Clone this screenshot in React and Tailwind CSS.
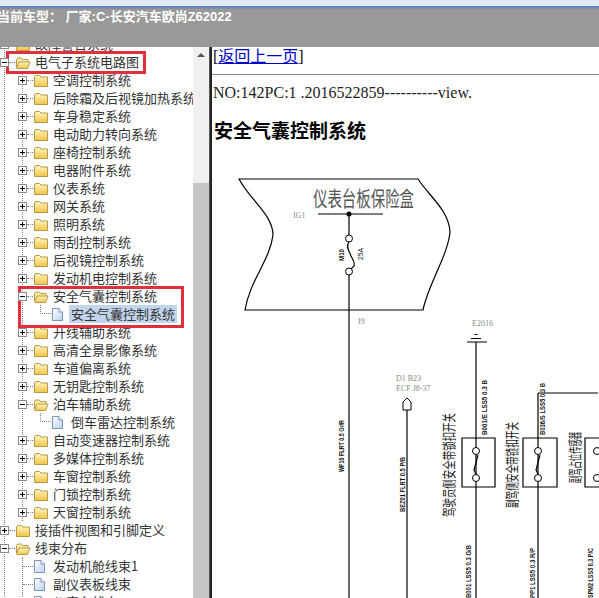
const cjk = { fontFamily: '"Noto Sans CJK SC", sans-serif' };

// child nodes under 电气子系统电路图
const systems = [
  { name: "空调控制系统" },
  { name: "后除霜及后视镜加热系统" },
  { name: "车身稳定系统" },
  { name: "电动助力转向系统" },
  { name: "座椅控制系统" },
  { name: "电器附件系统" },
  { name: "仪表系统" },
  { name: "网关系统" },
  { name: "照明系统" },
  { name: "雨刮控制系统" },
  { name: "后视镜控制系统" },
  { name: "发动机电控制系统" },
  { name: "安全气囊控制系统", open: true, file: "安全气囊控制系统", selected: true },
  { name: "开线辅助系统" },
  { name: "高清全景影像系统" },
  { name: "车道偏离系统" },
  { name: "无钥匙控制系统" },
  { name: "泊车辅助系统", open: true, file: "倒车雷达控制系统" },
  { name: "自动变速器控制系统" },
  { name: "多媒体控制系统" },
  { name: "车窗控制系统" },
  { name: "门锁控制系统" },
  { name: "天窗控制系统" },
];

const Expander = ({ open }) => (
  <span className="relative z-10 -ml-[5px] flex h-[9px] w-[9px] shrink-0 items-center justify-center border border-[#8a8a8a] bg-white">
    <span className="absolute h-px w-[5px] bg-black" />
    {!open && <span className="absolute h-[5px] w-px bg-black" />}
  </span>
);

const Folder = ({ open }) => (
  <svg width="16" height="15" viewBox="0 0 16 15" className="shrink-0">
    <defs>
      <linearGradient id="folderFill" x1="0" y1="0" x2="0" y2="1">
        <stop offset="0" stopColor="#fff6c4" />
        <stop offset="1" stopColor="#f3c445" />
      </linearGradient>
    </defs>
    {open ? (
      <>
        <path d="M1.5 12V4.5l1-1.5h4l1 1.5H13V7" fill="#fbe9a0" stroke="#b59a4a" />
        <path d="M1.5 13L4 7h11l-2.5 6.5H2z" fill="url(#folderFill)" stroke="#b59a4a" />
      </>
    ) : (
      <path d="M1.5 13.5V4l1-1.5h4L8 4h6.5v9.5z" fill="url(#folderFill)" stroke="#b59a4a" />
    )}
  </svg>
);

const FileIcon = () => (
  <svg width="13" height="15" viewBox="0 0 13 15" className="shrink-0">
    <defs>
      <linearGradient id="fileFill" x1="0" y1="0" x2="1" y2="1">
        <stop offset="0" stopColor="#ffffff" />
        <stop offset="1" stopColor="#bcd3f2" />
      </linearGradient>
    </defs>
    <path d="M1.5 1.5h6.5l3.5 3.5v8.5h-10z" fill="url(#fileFill)" stroke="#7d93b8" />
    <path d="M8 1.5V5h3.500" fill="#fff" stroke="#7d93b8" />
  </svg>
);

const Label = ({ children, className = "" }) => (
  <span className={`whitespace-nowrap text-[13px] leading-[18px] text-[#333] ${className}`} style={cjk}>
    {children}
  </span>
);

const FolderRow = ({ name, open }) => (
  <div className="flex h-[18px] items-center">
    <Expander open={open} />
    <span className="w-[6px] shrink-0 border-t border-dotted border-[#808080]" />
    <Folder open={open} />
    <Label className="ml-[4px]">{name}</Label>
  </div>
);

const FileRow = ({ name, stub, selected, gap }) => (
  <div className="flex h-[18px] items-center">
    <span className={`${stub} shrink-0 border-t border-dotted border-[#808080]`} />
    <FileIcon />
    <Label className={`${gap} ${selected ? "bg-[#c3d5ec] px-[2px]" : ""}`}>{name}</Label>
  </div>
);

const Tree = () => (
  <div className="relative -mt-[12px] ml-[4px] border-l border-dotted border-[#808080]">
    <FolderRow name="故障警告系统" />
    <FolderRow name="电气子系统电路图" open />
    <div className="ml-[17px] border-l border-dotted border-[#808080]">
      {systems.map((s) => (
        <div key={s.name}>
          <FolderRow name={s.name} open={s.open} />
          {s.file && (
            <div className="ml-[17px]">
              <FileRow
                name={s.file}
                stub="w-[11px] border-l h-[9px] -mt-[9px] border-t-0 border-b"
                selected={s.selected}
                gap={s.selected ? "ml-[5px]" : "ml-[7px]"}
              />
            </div>
          )}
        </div>
      ))}
    </div>
    <FolderRow name="接插件视图和引脚定义" />
    <FolderRow name="线束分布" open />
    <div className="ml-[17px] border-l border-dotted border-[#808080]">
      <FileRow name="发动机舱线束1" stub="w-[10px]" gap="ml-[7px]" />
      <FileRow name="副仪表板线束" stub="w-[10px]" gap="ml-[7px]" />
      <FileRow name="仪表台线束" stub="w-[10px]" gap="ml-[7px]" />
    </div>
  </div>
);

// rotated wire label reading bottom to top, x is baseline, y is the bottom end
const Wire = ({ x, y, len, children, size = 7, bold = true }) => (
  <text
    x={x}
    y={y}
    transform={`rotate(-90 ${x} ${y})`}
    textLength={len}
    lengthAdjust="spacingAndGlyphs"
    fontSize={size}
    fontWeight={bold ? 700 : 400}
    fontFamily='"Liberation Sans", sans-serif'
    fill="#111"
  >
    {children}
  </text>
);

const Cn = ({ x, y, len, children }) => (
  <text
    x={x}
    y={y}
    transform={`rotate(-90 ${x} ${y})`}
    textLength={len}
    lengthAdjust="spacingAndGlyphs"
    fontSize="14"
    fontFamily='"Noto Sans CJK SC", sans-serif'
    fill="#222"
  >
    {children}
  </text>
);

const Small = ({ x, y, children }) => (
  <text x={x} y={y} fontSize="8" fontFamily='"Liberation Serif", serif' fill="#888">
    {children}
  </text>
);

const Contact = ({ x, y }) => (
  <circle cx={x} cy={y} r="3.5" fill="#fff" stroke="#000" />
);

const Diagram = () => (
  <svg width="387" height="428" viewBox="212 170 387 428" className="block shrink-0">
    <g fill="none" stroke="#000" strokeWidth="1.2">
      <path d="M239 179H418C428 195 449 210 450 232C448 255 428 285 423 310H245C250 280 270 260 273 235C273 215 250 200 239 179Z" />
      <path d="M318 214H383" />
      <path d="M349 214V235" />
      <path d="M349 242C345 247 350 252 351 256C353 260 355 262 354 266L350 270" />
      <path d="M349 274.500V598" />
      <path d="M407 410V598" />
      <path d="M476 342V598" />
      <path d="M467 342H487M471 338.500H481M474.500 334.500H477.500" />
      <path d="M538 393V598M538 393H598" />
      <path d="M462 438H495V487H462Z" />
      <path d="M523 438H557V487H523Z" />
      <path d="M599 438H585V487H599" />
      <path d="M478 455L474 470L476 474" />
      <path d="M540 455L536 470L538 474" />
    </g>
    <circle cx="349" cy="214" r="2.500" fill="#000" />
    <Contact x={349} y={238.5} />
    <Contact x={349} y={271.5} />
    <Contact x={476} y={451} />
    <Contact x={476} y={478} />
    <Contact x={538} y={451} />
    <Contact x={538} y={478} />
    <Contact x={597} y={451} />
    <Contact x={597} y={478} />
    <path d="M407 398L411 402V410H403V402Z" fill="#fff" stroke="#000" />
    <text x="313" y="206" textLength="101" lengthAdjust="spacingAndGlyphs" fontSize="21" fontFamily='"Noto Sans CJK SC", sans-serif' fill="#555">
      仪表台板保险盒
    </text>
    <Small x={293} y={218}>IG1</Small>
    <Small x={358} y={324}>I9</Small>
    <Small x={396} y={381}>D1 B23</Small>
    <Small x={396} y={391}>ECF J8-37</Small>
    <Small x={472} y={326}>E2016</Small>
    <Wire x={344} y={261} len={12}>M10</Wire>
    <Wire x={363} y={260} len={12} bold={false}>25A</Wire>
    <Wire x={344} y={472} len={52}>WF10 FLRT 0.5 Gr/R</Wire>
    <Wire x={405} y={512} len={55}>BEZ01 FLRT 0.5 P/B</Wire>
    <Wire x={471} y={598} len={53}>B001 LSS5 0.3 G/B</Wire>
    <Wire x={487} y={435} len={55}>B001/E LSS5 0.3 B</Wire>
    <Wire x={545} y={435} len={52}>B036/S LSS5 0.3 B</Wire>
    <Wire x={535} y={598} len={50}>PP1 LSS5 0.3 R/P</Wire>
    <Wire x={593} y={598} len={50}>SPM2 LSS5 0.3 P/C</Wire>
    <Cn x={454} y={517} len={104}>驾驶员侧安全带锁扣开关</Cn>
    <Cn x={517} y={508} len={86}>副驾侧安全带锁扣开关</Cn>
    <Cn x={580} y={483} len={51}>副驾占位传感器</Cn>
  </svg>
);

export default function App() {
  return (
    <div className="relative flex h-[598px] w-[599px] flex-col overflow-hidden bg-white">
      <div className="h-[6px] shrink-0 bg-gradient-to-b from-[#dbe6f6] to-[#e6eef9]" />
      <div className="h-[3px] shrink-0 bg-gradient-to-b from-[#4c78c4] to-[#8b93a3]" />
      <div className="h-[38px] shrink-0 bg-[#999999] text-[13px] leading-[15px] font-bold text-white">
        <div className="-ml-[3px] whitespace-pre" style={{ fontFamily: '"Liberation Sans", "Noto Sans CJK SC", sans-serif' }}>
          当前车型： 厂家:C-长安汽车欧尚Z62022
        </div>
      </div>

      <div className="flex min-h-0 flex-1">
        <div className="w-[193px] shrink-0 overflow-hidden">
          <Tree />
        </div>

        <div className="flex w-[16px] shrink-0 flex-col bg-[#f0f0f0]">
          <div className="flex h-[136px] justify-center pt-[6px]">
            <span className="h-0 w-0 border-x-[4px] border-b-[4px] border-x-transparent border-b-[#555]" />
          </div>
          <div className="flex-1 bg-[#c6c6c6]" />
        </div>

        <div className="w-[3px] shrink-0 bg-gradient-to-r from-[#777] via-[#222] to-[#222]" />

        <div className="flex min-w-0 flex-1 flex-col overflow-hidden text-[16px] text-black" style={{ fontFamily: '"Liberation Serif", "Noto Sans CJK SC", serif' }}>
          <div className="ml-[1px] h-[27px] leading-[20px] whitespace-nowrap">
            [<span className="text-[#0000cc] underline">返回上一页</span>]
          </div>
          <div className="h-px shrink-0 bg-[#888]" />
          <div className="ml-[1px] mt-[9px] h-[18px] leading-[18px] whitespace-nowrap text-[#222]">
            NO:142PC:1 .2016522859----------view.
          </div>
          <div className="ml-[2px] mt-[14px] h-[27px] text-[19px] leading-[27px] font-semibold whitespace-nowrap" style={cjk}>
            安全气囊控制系统
          </div>
          <div className="mt-[27px]">
            <Diagram />
          </div>
        </div>
      </div>

      {/* red annotation boxes drawn over the tree */}
      <div className="absolute left-[6px] top-[51px] h-[23px] w-[140px] border-[3px] border-[#e0303c]" />
      <div className="absolute left-[18px] top-[286px] h-[42px] w-[166px] border-[3px] border-[#e0303c]" />
    </div>
  );
}
